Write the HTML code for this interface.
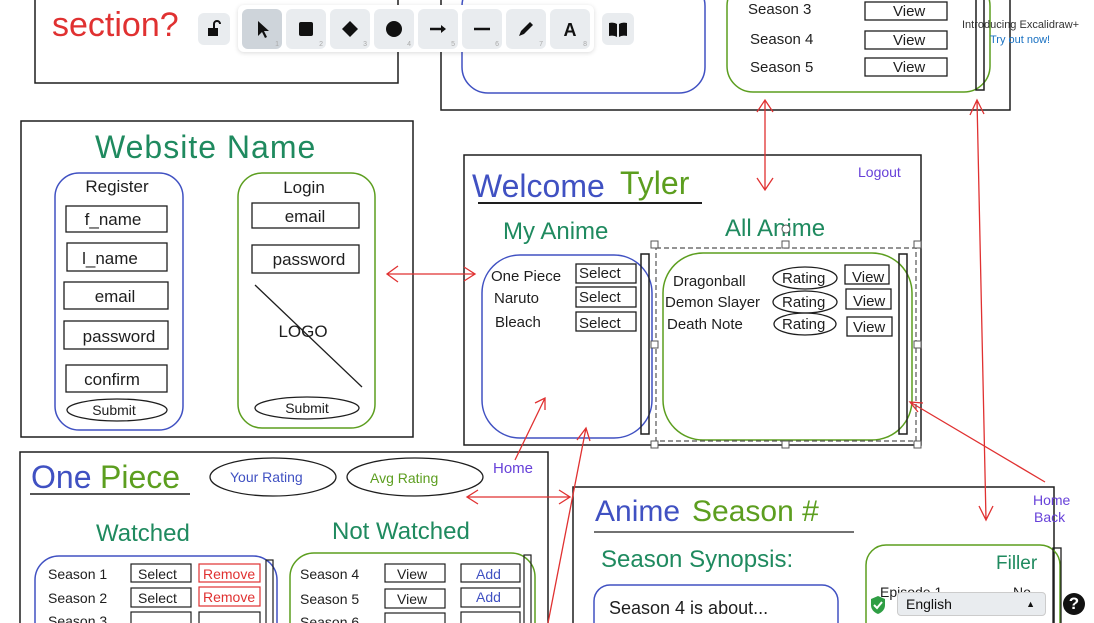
<!DOCTYPE html>
<html><head><meta charset="utf-8"><style>
html,body{margin:0;padding:0;width:1094px;height:623px;overflow:hidden;background:#fff;font-family:"Liberation Sans",sans-serif}
svg{position:absolute;left:0;top:0}
svg text{font-family:"Liberation Sans","DejaVu Sans",sans-serif}
.tb{position:absolute;top:5px;left:238px;width:356px;height:47px;background:#fff;border-radius:6px;box-shadow:0 1px 5px rgba(0,0,0,.15)}
.btn{position:absolute;top:4px;width:40px;height:40px;border-radius:6px;background:#e9ecef}
.btn small{position:absolute;right:3px;bottom:1px;font-size:7px;color:#aaa}
.sb{position:absolute;width:32px;height:32px;border-radius:6px;background:#e9ecef}
</style></head><body>
<svg width="1094" height="623" viewBox="0 0 1094 623">
<g fill="none" stroke="#1e1e1e" stroke-width="1.5">
<!-- top-left box -->
<path d="M35 -5 V83 H398 V-5"/>
<!-- top-right box -->
<path d="M441 -5 V110 H1010 V-5"/>
<!-- left box -->
<rect x="21" y="121" width="392" height="316"/>
<!-- middle -->
<rect x="464" y="155" width="457" height="290"/>
<!-- bottom left -->
<path d="M20 630 V452 H548 V630"/>
<!-- bottom right -->
<path d="M573 630 V487 H1054 V630"/>
</g>
<text x="52" y="36" font-size="34" fill="#e03131">section?</text>
<!-- top right content -->
<rect x="462" y="-20" width="243" height="113" rx="26" fill="none" stroke="#4051c2" stroke-width="1.5"/>
<rect x="727" y="-20" width="263" height="112" rx="26" fill="none" stroke="#5c9e1f" stroke-width="1.5"/>
<rect x="976" y="-5" width="8" height="95" fill="none" stroke="#1e1e1e" stroke-width="1.5"/>
<g font-size="15" fill="#1e1e1e">
<text x="748" y="14">Season 3</text><text x="750" y="44">Season 4</text><text x="750" y="72">Season 5</text>
<text x="893" y="16">View</text><text x="893" y="45">View</text><text x="893" y="72">View</text>
</g>
<g fill="none" stroke="#1e1e1e" stroke-width="1.3">
<rect x="865" y="2" width="82" height="18"/><rect x="865" y="31" width="82" height="18"/><rect x="865" y="58" width="82" height="18"/>
</g>
<text x="962" y="28" font-size="11" fill="#333">Introducing Excalidraw+</text>
<text x="990" y="43" font-size="11" fill="#1971c2">Try out now!</text>
<!-- left box content -->
<text x="95" y="158" font-size="32" fill="#1f8a5f" letter-spacing="1">Website Name</text>
<rect x="55" y="173" width="128" height="257" rx="24" fill="none" stroke="#4051c2" stroke-width="1.5"/>
<rect x="238" y="173" width="137" height="255" rx="24" fill="none" stroke="#5c9e1f" stroke-width="1.5"/>
<g font-size="17" fill="#1e1e1e" text-anchor="middle">
<text x="117" y="192">Register</text><text x="304" y="193">Login</text>
<text x="113" y="225">f_name</text><text x="110" y="264">l_name</text><text x="115" y="302">email</text><text x="119" y="342">password</text><text x="112" y="385">confirm</text>
<text x="305" y="222">email</text><text x="309" y="265">password</text><text x="303" y="337">LOGO</text>
<text x="114" y="415" font-size="14">Submit</text><text x="307" y="413" font-size="14">Submit</text>
</g>
<g fill="none" stroke="#1e1e1e" stroke-width="1.3">
<rect x="66" y="206" width="101" height="26"/><rect x="67" y="243" width="100" height="28"/><rect x="64" y="282" width="104" height="27"/><rect x="64" y="321" width="104" height="28"/><rect x="66" y="365" width="101" height="27"/>
<rect x="252" y="203" width="107" height="25"/><rect x="252" y="245" width="107" height="28"/>
<ellipse cx="117" cy="410" rx="50" ry="11"/><ellipse cx="307" cy="408" rx="52" ry="11"/>
<path d="M255 285 L362 387"/>
</g>
<!-- middle content -->
<text x="472" y="197" font-size="32" fill="#4051c2">Welcome</text>
<text x="620" y="194" font-size="32" fill="#5c9e1f">Tyler</text>
<path d="M478 203 H702" stroke="#1e1e1e" stroke-width="2"/>
<text x="858" y="177" font-size="14" fill="#6741d9">Logout</text>
<text x="503" y="239" font-size="24" fill="#1f8a5f">My Anime</text>
<text x="725" y="236" font-size="24" fill="#1f8a5f">All Anime</text>
<rect x="482" y="255" width="170" height="183" rx="38" fill="none" stroke="#4051c2" stroke-width="1.5"/>
<rect x="663" y="253" width="249" height="187" rx="40" fill="none" stroke="#5c9e1f" stroke-width="1.5"/>
<rect x="641" y="254" width="8" height="180" fill="none" stroke="#1e1e1e" stroke-width="1.5"/>
<rect x="899" y="254" width="8" height="180" fill="none" stroke="#1e1e1e" stroke-width="1.5"/>
<g font-size="15" fill="#1e1e1e">
<text x="491" y="281">One Piece</text><text x="494" y="303">Naruto</text><text x="495" y="327">Bleach</text>
<text x="579" y="278">Select</text><text x="579" y="302">Select</text><text x="579" y="328">Select</text>
<text x="673" y="286">Dragonball</text><text x="665" y="307">Demon Slayer</text><text x="667" y="329">Death Note</text>
<text x="782" y="283">Rating</text><text x="782" y="307">Rating</text><text x="782" y="329">Rating</text>
<text x="852" y="282">View</text><text x="853" y="306">View</text><text x="853" y="332">View</text>
</g>
<g fill="none" stroke="#1e1e1e" stroke-width="1.3">
<rect x="576" y="264" width="60" height="19"/><rect x="576" y="287" width="60" height="20"/><rect x="576" y="312" width="60" height="19"/>
<ellipse cx="805" cy="278" rx="32" ry="11"/><ellipse cx="805" cy="302" rx="32" ry="11"/><ellipse cx="805" cy="324" rx="31" ry="11"/>
<rect x="845" y="265" width="44" height="19"/><rect x="846" y="289" width="45" height="20"/><rect x="847" y="317" width="45" height="19"/>
</g>
<rect x="656" y="248" width="260" height="193" fill="none" stroke="#555" stroke-width="1.2" stroke-dasharray="5 3"/>
<g fill="#fff" stroke="#555" stroke-width="1">
<rect x="651" y="241" width="7" height="7"/><rect x="914" y="241" width="7" height="7"/><rect x="651" y="441" width="7" height="7"/><rect x="914" y="441" width="7" height="7"/>
<rect x="782" y="241" width="7" height="7"/><rect x="782" y="441" width="7" height="7"/><rect x="651" y="341" width="7" height="7"/><rect x="914" y="341" width="7" height="7"/>
<circle cx="786" cy="229" r="4"/>
</g>
<!-- bottom left content -->
<text x="31" y="488" font-size="32" fill="#4051c2">One</text>
<text x="100" y="488" font-size="32" fill="#5c9e1f">Piece</text>
<path d="M30 494 H190" stroke="#1e1e1e" stroke-width="1.5"/>
<ellipse cx="273" cy="477" rx="63" ry="19" fill="none" stroke="#1e1e1e" stroke-width="1.3"/>
<ellipse cx="415" cy="477" rx="68" ry="19" fill="none" stroke="#1e1e1e" stroke-width="1.3"/>
<text x="230" y="482" font-size="14" fill="#4051c2">Your Rating</text>
<text x="370" y="483" font-size="14" fill="#5c9e1f">Avg Rating</text>
<text x="493" y="473" font-size="15" fill="#6741d9">Home</text>
<text x="96" y="541" font-size="24" fill="#1f8a5f">Watched</text>
<text x="332" y="539" font-size="24" fill="#1f8a5f">Not Watched</text>
<rect x="35" y="556" width="242" height="100" rx="24" fill="none" stroke="#4051c2" stroke-width="1.5"/>
<rect x="290" y="553" width="245" height="100" rx="24" fill="none" stroke="#5c9e1f" stroke-width="1.5"/>
<g font-size="14" fill="#1e1e1e">
<text x="48" y="579">Season 1</text><text x="48" y="603">Season 2</text><text x="48" y="626">Season 3</text>
<text x="138" y="579">Select</text><text x="138" y="603">Select</text>
<text x="300" y="579">Season 4</text><text x="300" y="604">Season 5</text><text x="300" y="627">Season 6</text>
<text x="397" y="579">View</text><text x="397" y="604">View</text>
</g>
<g font-size="14" fill="#e03131"><text x="203" y="579">Remove</text><text x="203" y="602">Remove</text></g>
<g font-size="14" fill="#4051c2"><text x="476" y="579">Add</text><text x="476" y="602">Add</text></g>
<g fill="none" stroke="#1e1e1e" stroke-width="1.2">
<rect x="131" y="564" width="60" height="18"/><rect x="131" y="588" width="60" height="19"/><rect x="131" y="612" width="60" height="19"/>
<rect x="199" y="564" width="61" height="18" stroke="#e03131"/><rect x="199" y="587" width="61" height="19" stroke="#e03131"/><rect x="199" y="612" width="61" height="19"/>
<rect x="385" y="564" width="60" height="18"/><rect x="385" y="589" width="60" height="19"/><rect x="385" y="613" width="60" height="19"/>
<rect x="461" y="564" width="59" height="18"/><rect x="461" y="588" width="59" height="19"/><rect x="461" y="612" width="59" height="19"/>
<rect x="266" y="560" width="7" height="70"/><rect x="524" y="555" width="7" height="70"/>
</g>
<!-- bottom right content -->
<text x="595" y="521" font-size="30" fill="#4051c2">Anime</text>
<text x="692" y="521" font-size="30" fill="#5c9e1f">Season #</text>
<path d="M594 532 H854" stroke="#1e1e1e" stroke-width="1.3"/>
<text x="1033" y="505" font-size="14" fill="#6741d9">Home</text>
<text x="1034" y="522" font-size="14" fill="#6741d9">Back</text>
<text x="601" y="567" font-size="24" fill="#1f8a5f">Season Synopsis:</text>
<rect x="594" y="585" width="244" height="60" rx="16" fill="none" stroke="#4051c2" stroke-width="1.5"/>
<text x="609" y="614" font-size="18" fill="#1e1e1e">Season 4 is about...</text>
<rect x="866" y="545" width="194" height="100" rx="20" fill="none" stroke="#5c9e1f" stroke-width="1.5"/>
<rect x="1053" y="548" width="8" height="80" fill="none" stroke="#1e1e1e" stroke-width="1.3"/>
<text x="996" y="569" font-size="19" fill="#1f8a5f">Filler</text>
<text x="880" y="597" font-size="14" fill="#1e1e1e">Episode 1</text><text x="1013" y="597" font-size="14" fill="#1e1e1e">No</text>
<!-- red arrows -->
<g fill="none" stroke="#e03131" stroke-width="1.3">
<path d="M765 100 V190 M757 112 L765 100 L773 112 M757 178 L765 190 L773 178"/>
<path d="M977 100 L986 520 M970 115 L977 100 L984 114 M979 506 L986 520 L993 506"/>
<path d="M387 274 H475 M398 266 L387 274 L398 282 M464 267 L475 274 L464 281"/>
<path d="M545 398 L515 460 M535 403 L545 398 L545 410"/>
<path d="M586 428 L548 623 M577 440 L586 428 L590 441"/>
<path d="M467 497 H570 M478 490 L467 497 L478 504 M559 490 L570 497 L559 504"/>
<path d="M910 402 L1045 482 M918 412 L910 402 L923 403"/>
</g>
</svg>
<div class="sb" style="left:198px;top:13px"><svg width="32" height="32"><rect x="10" y="15" width="10" height="8" fill="#111"/><path d="M16 15 V11 a3 3 0 0 1 6 0" fill="none" stroke="#111" stroke-width="2"/></svg></div>
<div class="tb">
<div class="btn" style="left:4px;background:#ced4da"><svg width="40" height="40"><path d="M16 12 L16 27 L20 23 L23 29 L25 28 L22 22 L27 22 Z" fill="#111"/></svg><small>1</small></div>
<div class="btn" style="left:48px"><svg width="40" height="40"><rect x="13" y="13" width="14" height="14" rx="2" fill="#111"/></svg><small>2</small></div>
<div class="btn" style="left:92px"><svg width="40" height="40"><path d="M20 12 L28 20 L20 28 L12 20 Z" fill="#111"/></svg><small>3</small></div>
<div class="btn" style="left:136px"><svg width="40" height="40"><circle cx="20" cy="20" r="8" fill="#111"/></svg><small>4</small></div>
<div class="btn" style="left:180px"><svg width="40" height="40"><path d="M12 20 H26" stroke="#111" stroke-width="2.5"/><path d="M23 16 L28 20 L23 24 Z" fill="#111"/></svg><small>5</small></div>
<div class="btn" style="left:224px"><svg width="40" height="40"><path d="M12 20 H28" stroke="#111" stroke-width="2.5"/></svg><small>6</small></div>
<div class="btn" style="left:268px"><svg width="40" height="40"><path d="M13 27 L15 22 L24 13 L27 16 L18 25 Z" fill="#111"/></svg><small>7</small></div>
<div class="btn" style="left:312px"><svg width="40" height="40"><text x="20" y="27" font-size="18" font-weight="bold" text-anchor="middle" font-family="Liberation Serif,serif" fill="#111">A</text></svg><small>8</small></div>
</div>
<div class="sb" style="left:602px;top:13px"><svg width="32" height="32"><path d="M7 10 Q12 9 15 11 V24 Q12 22 7 23 Z M25 10 Q20 9 17 11 V24 Q20 22 25 23 Z" fill="#111"/></svg></div>
<svg style="left:869px;top:595px" width="18" height="20"><path d="M9 1 L16 4 V10 Q16 16 9 19 Q2 16 2 10 V4 Z" fill="#2f9e44"/><path d="M5 10 L8 13 L13 7" stroke="#fff" stroke-width="2" fill="none"/></svg>
<div style="position:absolute;left:897px;top:592px;width:149px;height:24px;background:#e9ecef;border:1px solid #ccc;border-radius:4px;box-sizing:border-box;font-size:14px;line-height:22px;padding-left:8px;color:#111">English<span style="position:absolute;right:10px;top:0;font-size:9px">▲</span></div>
<div style="position:absolute;left:1063px;top:593px;width:22px;height:22px;border-radius:50%;background:#111;color:#fff;font-weight:bold;font-size:17px;line-height:22px;text-align:center">?</div>
</body></html>
